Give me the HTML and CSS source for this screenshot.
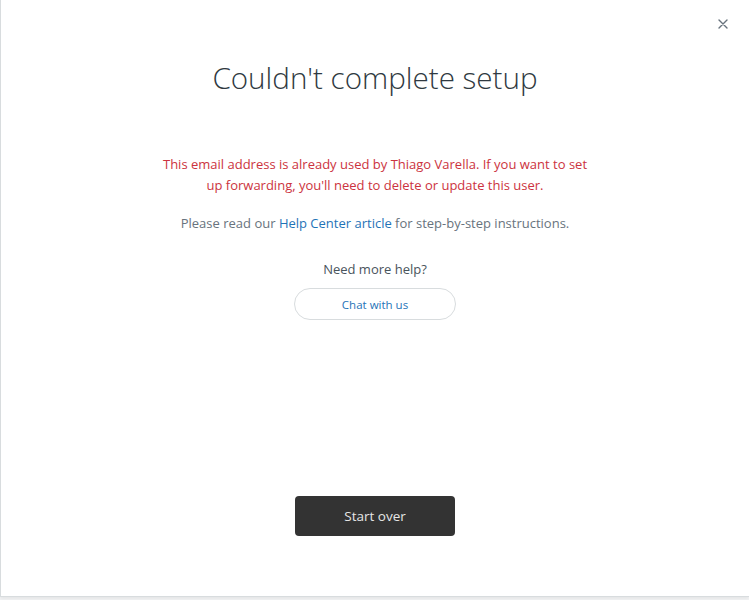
FILE: index.html
```html
<!DOCTYPE html>
<html lang="en">
<head>
  <meta charset="UTF-8" />
  <title>Couldn't complete setup</title>
  <link rel="stylesheet" href="styles.css">
</head>
<body>

<div class="panel">
  <button class="close" aria-label="Close">
    <svg width="10" height="10" viewBox="0 0 10 10"><path d="M1 1l8 8M9 1l-8 8" stroke="#68737d" stroke-width="1.4" stroke-linecap="round"/></svg>
  </button>

  <div class="content">
    <h1>Couldn't complete setup</h1>

    <p class="error">This email address is already used by Thiago Varella. If you want to set up forwarding, you'll need to delete or update this user.</p>

    <p class="hint">Please read our <a href="#">Help Center article</a> for step-by-step instructions.</p>

    <p class="more">Need more help?</p>
    <button class="chat">Chat with us</button>
  </div>

  <div class="footer">
    <button class="start">Start over</button>
  </div>
</div>

</body>
</html>
```

FILE: styles.css
```css
* { margin: 0; padding: 0; box-sizing: border-box; font-family: 'Open Sans', 'Noto Sans', sans-serif; }
body, html { height: 100%; overflow: hidden; background: #f3f4f5; }

.panel {
  position: relative;
  width: 749px;
  height: 597px;
  background: #fff;
  border-left: 1px solid #d8dcde;
  border-bottom: 1px solid #d8dcde;
  box-shadow: 0 2px 3px rgba(0,0,0,0.06);
  display: flex;
  flex-direction: column;
  align-items: center;
}

.close {
  position: absolute;
  top: 19px;
  right: 21px;
  width: 10px;
  height: 10px;
  background: none;
  border: none;
  cursor: pointer;
}
.close svg { display: block; }

.content {
  width: 440px;
  text-align: center;
  padding-top: 58px;
}

h1 {
  font-size: 29.6px;
  font-weight: 300;
  color: #2f3941;
  line-height: 40px;
  margin: 0 -40px 56px;
}

.error {
  font-size: 13px;
  line-height: 21px;
  color: #cc3340;
  margin-bottom: 17px;
}

.hint {
  font-size: 13px;
  line-height: 20px;
  color: #68737d;
  margin-bottom: 26px;
}
.hint a { color: #1f73b7; text-decoration: none; }

.more {
  font-size: 13px;
  line-height: 20px;
  color: #49545c;
  margin-bottom: 9px;
}

.chat {
  width: 162px;
  height: 32px;
  border: 1px solid #d8dcde;
  border-radius: 16px;
  background: #fff;
  color: #1f73b7;
  font-size: 11.5px;
  cursor: pointer;
}

.footer {
  margin-top: auto;
  padding-bottom: 60px;
}

.start {
  width: 160px;
  height: 40px;
  border: none;
  border-radius: 4px;
  background: #333;
  color: #e6e6e6;
  font-size: 13.5px;
  cursor: pointer;
}
```
